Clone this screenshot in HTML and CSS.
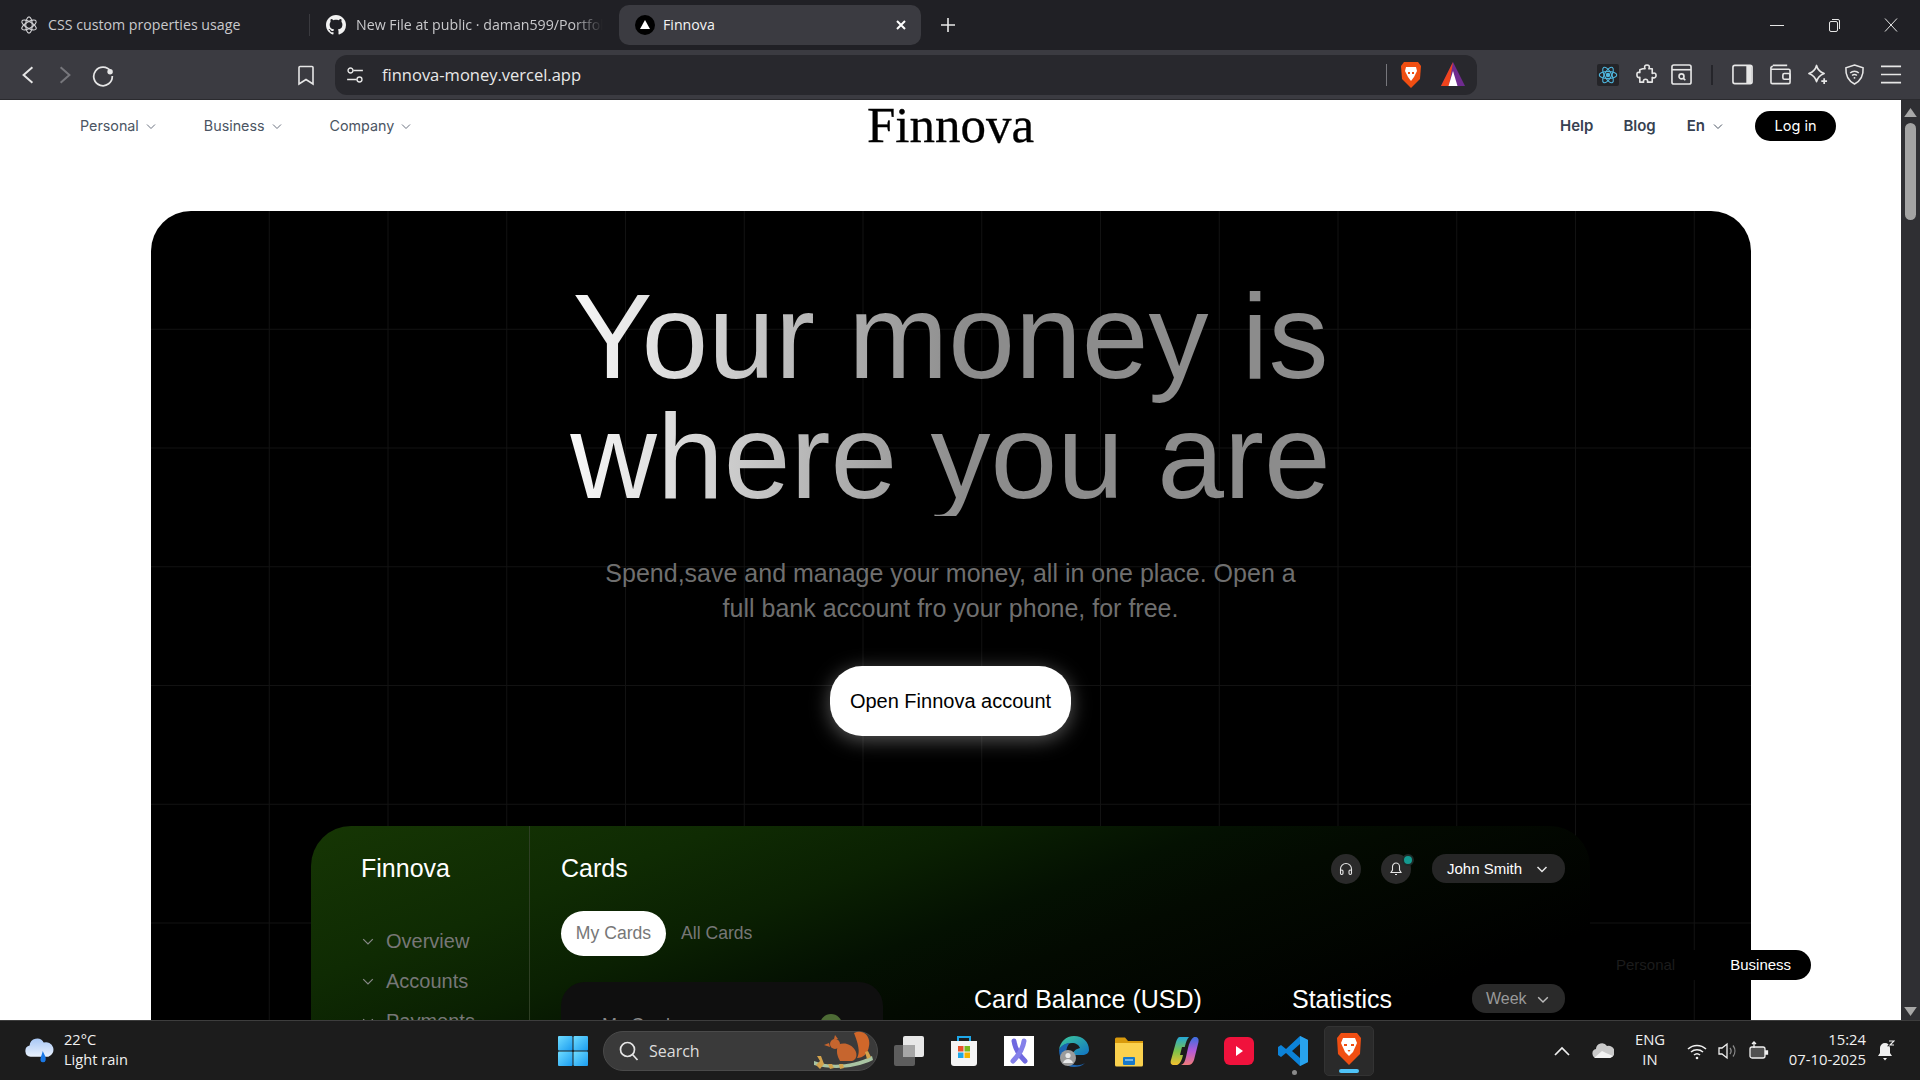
FILE: index.html
```html
<!DOCTYPE html>
<html lang="en">
<head>
<meta charset="utf-8">
<title>Finnova</title>
<link rel="stylesheet" href="styles.css">
</head>
<body>
<div class="screen">
  <header class="tabstrip">
    <div class="tab tab-one">
      <svg class="ico16" viewBox="0 0 20 20" fill="none" stroke="#d0d0d3" stroke-width="1.2"><ellipse cx="10" cy="10" rx="3.600" ry="9"/><ellipse cx="10" cy="10" rx="3.600" ry="9" transform="rotate(60 10 10)"/><ellipse cx="10" cy="10" rx="3.600" ry="9" transform="rotate(120 10 10)"/></svg>
      <span>CSS custom properties usage</span>
    </div>
    <div class="tab tab-two">
      <svg class="ico20" viewBox="0 0 16 16" fill="#f2f2f2"><path d="M8 0C3.58 0 0 3.58 0 8c0 3.54 2.29 6.53 5.47 7.59.4.07.55-.17.55-.38 0-.19-.01-.82-.01-1.49-2.01.37-2.53-.49-2.69-.94-.09-.23-.48-.94-.82-1.13-.28-.15-.68-.52-.01-.53.63-.01 1.08.58 1.23.82.72 1.21 1.87.87 2.33.66.07-.52.28-.87.51-1.07-1.78-.2-3.64-.89-3.64-3.95 0-.87.31-1.59.82-2.15-.08-.2-.36-1.02.08-2.12 0 0 .67-.21 2.2.82.64-.18 1.32-.27 2-.27.68 0 1.36.09 2 .27 1.53-1.04 2.2-.82 2.2-.82.44 1.1.16 1.92.08 2.12.51.56.82 1.27.82 2.15 0 3.07-1.87 3.75-3.65 3.95.29.25.54.73.54 1.48 0 1.07-.01 1.93-.01 2.2 0 .21.15.46.55.38A8.013 8.013 0 0016 8c0-4.42-3.58-8-8-8z"/></svg>
      <span class="fade">New File at public · daman599/Portfolio</span>
    </div>
    <div class="tab tab-active">
      <svg class="ico20" viewBox="0 0 20 20"><circle cx="10" cy="10" r="10" fill="#000"/><path d="M10 5l5 9H5z" fill="#fff"/></svg>
      <span class="tab-title">Finnova</span>
      <svg class="ico12" viewBox="0 0 12 12" stroke="#fff" stroke-width="2"><path d="M2 2l8 8M10 2l-8 8"/></svg>
    </div>
    <svg class="newtab ico14" viewBox="0 0 14 14" stroke="#e8e8e8" stroke-width="1.6"><path d="M7 0v14M0 7h14"/></svg>
    <div class="winctl">
      <svg class="ico14" viewBox="0 0 14 14" stroke="#e6e6e6"><path d="M0 7.5h14"/></svg>
      <svg class="ico14" viewBox="0 0 14 14" fill="none" stroke="#e6e6e6"><rect x="2.5" y="3.5" width="8" height="10" rx="1.5"/><path d="M5 1.5h6a1.5 1.5 0 011.5 1.5v8"/></svg>
      <svg class="ico14" viewBox="0 0 14 14" stroke="#e6e6e6"><path d="M1 0.5l12 13M13 0.5l-12 13"/></svg>
    </div>
  </header>

  <div class="toolbar">
    <svg class="tool tool-back" viewBox="0 0 20 20" fill="none" stroke="#e6e6e6" stroke-width="1.8"><path d="M14 3L6 10l8 7"/></svg>
    <svg class="tool tool-forward" viewBox="0 0 20 20" fill="none" stroke="#77777c" stroke-width="1.8"><path d="M6 3l8 7-8 7"/></svg>
    <svg class="tool tool-reload" viewBox="0 0 22 22" fill="none" stroke="#e6e6e6" stroke-width="1.6"><path d="M18 7.500A8.500 8.500 0 1 0 19.500 12"/><circle cx="17.500" cy="8" r="2.500" fill="#e6e6e6" stroke="none"/></svg>
    <svg class="tool tool-mark" viewBox="0 0 20 22" fill="none" stroke="#e6e6e6" stroke-width="1.6"><path d="M4 2.5h12a1 1 0 011 1V20l-7-4.5L3 20V3.500a1 1 0 011-1z"/></svg>
    <div class="address">
      <svg class="ico16" viewBox="0 0 16 16" fill="none" stroke="#e6e6e6" stroke-width="1.2"><circle cx="4" cy="4" r="2.2"/><path d="M6.500 4H15M1 12h8.500"/><circle cx="12" cy="12" r="2.200"/></svg>
      <span class="url">finnova-money.vercel.app</span>
      <span class="addr-div"></span>
      <svg class="ico24" viewBox="0 0 24 28"><path d="M5 1h14l3 4-1 13-9 9-9-9L2 5z" fill="#f04e12"/><path d="M7 6h10l1 4-3 6-3 4-3-4-3-6z" fill="#fff"/><path d="M9 11h2v2H9zM13 11h2v2h-2z" fill="#f04e12"/></svg>
      <svg class="ico24 tri" viewBox="0 0 24 26"><path d="M12 0l12 24H0z" fill="#6f2b8f"/><path d="M12 0L0 24h8z" fill="#f0441c"/><path d="M12 9l4.500 15h-9z" fill="#fff"/></svg>
    </div>
    <div class="tools-right">
      <span class="react-tile"><svg class="ico20" viewBox="0 0 24 24" fill="none" stroke="#4fb8e0" stroke-width="1.3"><ellipse cx="12" cy="12" rx="10.500" ry="4.200"/><ellipse cx="12" cy="12" rx="10.500" ry="4.200" transform="rotate(60 12 12)"/><ellipse cx="12" cy="12" rx="10.500" ry="4.200" transform="rotate(120 12 12)"/><circle cx="12" cy="12" r="2" fill="#4fb8e0"/></svg></span>
      <svg class="tool-r r-puzzle" viewBox="0 0 22 22" fill="none" stroke="#e6e6e6" stroke-width="1.7" stroke-linejoin="round"><path d="M7 5h2.500C8 2 10 1 11.500 1s3.500 1 2 4H17v5c3-1.500 4 .5 4 2s-1 3.500-4 2v5h-5c1-2.500-1-3-2-3s-3 .5-2 3H4v-5C1 15 1 12 1 11s0-3 3-2V6z"/></svg>
      <svg class="tool-r r-tab" viewBox="0 0 22 22" fill="none" stroke="#e6e6e6" stroke-width="1.7"><rect x="1" y="1" width="20" height="20" rx="2"/><path d="M1 6h20"/><circle cx="11" cy="13" r="2.600"/><path d="M13 15l2 2"/></svg>
      <span class="tool-div"></span>
      <svg class="tool-r r-side" viewBox="0 0 22 22" fill="none" stroke="#e6e6e6" stroke-width="1.7"><rect x="1" y="1.500" width="20" height="19" rx="2"/><path d="M15 2h5.500v18H15z" fill="#e6e6e6" stroke="none"/></svg>
      <svg class="tool-r r-wallet" viewBox="0 0 22 22" fill="none" stroke="#e6e6e6" stroke-width="1.7"><path d="M3 1.500h15M1 5a2 2 0 012-2.500M1 5v14a1.500 1.500 0 001.500 1.500h17A1.500 1.500 0 0021 19V7a1.500 1.500 0 00-1.500-1.500H1"/><rect x="13.500" y="10" width="7.500" height="6" rx="1.500"/></svg>
      <svg class="tool-r r-star" viewBox="0 0 22 22" fill="none" stroke="#e6e6e6" stroke-width="1.7" stroke-linejoin="round"><path d="M10 1.500c1 4 3 6.500 8 8.500-5 2-7 4.500-8 8.500C9 14.500 7 12 2 10c5-2 7-4.500 8-8.500z"/><path d="M18 15v6M15 18h6" stroke-width="1.800"/></svg>
      <svg class="tool-r r-vpn" viewBox="0 0 22 22" fill="none" stroke="#e6e6e6" stroke-width="1.600"><path d="M11 1l9 3c.5 8-2 13.500-9 17C4 17.500 1.500 12 2 4z"/><path d="M6.500 9.500a6.500 6.500 0 019 0M8.500 12a3.500 3.500 0 015 0"/><circle cx="11" cy="14.500" r="1" fill="#e6e6e6" stroke="none"/></svg>
      <svg class="tool-r r-menu" viewBox="0 0 22 22" stroke="#e6e6e6" stroke-width="1.800"><path d="M0 2.500h21M0 11h21M0 19.500h21"/></svg>
    </div>
  </div>

  <div class="viewport">
    <main class="page">
      <nav class="sitenav">
        <div class="nav-left">
          <a class="nav-link">Personal<svg class="chev" viewBox="0 0 10 10" fill="none" stroke="#6b7280"><path d="M1 3.500l4 4 4-4"/></svg></a>
          <a class="nav-link">Business<svg class="chev" viewBox="0 0 10 10" fill="none" stroke="#6b7280"><path d="M1 3.500l4 4 4-4"/></svg></a>
          <a class="nav-link">Company<svg class="chev" viewBox="0 0 10 10" fill="none" stroke="#6b7280"><path d="M1 3.500l4 4 4-4"/></svg></a>
        </div>
        <div class="brand">Finnova</div>
        <div class="nav-right">
          <a class="nav-strong">Help</a>
          <a class="nav-strong">Blog</a>
          <a class="nav-strong nav-lang">En<svg class="chev" viewBox="0 0 10 10" fill="none" stroke="#4b5563"><path d="M1 3.500l4 4 4-4"/></svg></a>
          <a class="login">Log in</a>
        </div>
      </nav>

      <section class="hero">
        <h1 class="headline">Your money is<br>where you are</h1>
        <p class="lede">Spend,save and manage your money, all in one place. Open a<br>full bank account fro your phone, for free.</p>
        <a class="cta">Open Finnova account</a>

        <div class="dash">
          <aside class="dash-side">
            <div class="dash-logo">Finnova</div>
            <ul class="dash-menu">
              <li><svg class="chev-s" viewBox="0 0 10 10" fill="none" stroke="#888"><path d="M1 3.500l4 4 4-4"/></svg>Overview</li>
              <li><svg class="chev-s" viewBox="0 0 10 10" fill="none" stroke="#888"><path d="M1 3.500l4 4 4-4"/></svg>Accounts</li>
              <li><svg class="chev-s" viewBox="0 0 10 10" fill="none" stroke="#888"><path d="M1 3.500l4 4 4-4"/></svg>Payments</li>
            </ul>
          </aside>
          <div class="dash-main">
            <div class="dash-head">
              <h2 class="dash-title">Cards</h2>
              <div class="dash-actions">
                <span class="round"><svg class="ico14" viewBox="0 0 14 14" fill="none" stroke="#e6e6e6" stroke-width="1.100"><path d="M1.500 9V7a5.500 5.500 0 0111 0v2"/><rect x="1.500" y="8" width="2.500" height="4.500" rx="1.200"/><rect x="10" y="8" width="2.500" height="4.500" rx="1.200"/></svg></span>
                <span class="round round-bell"><svg class="ico14" viewBox="0 0 14 14" fill="none" stroke="#e6e6e6" stroke-width="1.100"><path d="M7 1a3.500 3.500 0 00-3.500 3.500V8L2 10.500h10L10.500 8V4.500A3.500 3.500 0 007 1zM6 12.500h2"/></svg><i class="bell-dot"></i></span>
                <span class="user">John Smith<svg class="chev-u" viewBox="0 0 12 12" fill="none" stroke="#e6e6e6" stroke-width="1.500"><path d="M1.500 4l4.500 4.500L10.500 4"/></svg></span>
              </div>
            </div>
            <div class="dash-tabs">
              <span class="pill-on">My Cards</span>
              <span class="pill-off">All Cards</span>
            </div>
            <div class="dash-row">
              <div class="mycard">
                <span>My Cards</span>
                <i class="mycard-dot"></i>
              </div>
              <h3 class="balance">Card Balance (USD)</h3>
              <div class="stats">
                <h3 class="stats-title">Statistics</h3>
                <span class="week">Week<svg class="chev-s" viewBox="0 0 10 10" fill="none" stroke="#bbb" stroke-width="1.200"><path d="M1 3.500l4 4 4-4"/></svg></span>
              </div>
            </div>
          </div>
        </div>
      </section>

      <div class="switcher">
        <span class="switch-off">Personal</span>
        <span class="switch-on">Business</span>
      </div>
    </main>
    <div class="scrollbar">
      <svg class="sb-arrow" viewBox="0 0 14 10" fill="#a8a8a8"><path d="M7 0l7 10H0z"/></svg>
      <span class="sb-thumb"></span>
      <svg class="sb-arrow sb-down" viewBox="0 0 14 10" fill="#a8a8a8"><path d="M7 10L0 0h14z"/></svg>
    </div>
  </div>

  <footer class="taskbar">
    <div class="weather">
      <svg class="weather-ico" viewBox="0 0 32 32"><defs><linearGradient id="wc" x1="0" y1="0" x2="0" y2="1"><stop offset="0" stop-color="#a9c8f5"/><stop offset="1" stop-color="#e8f0fc"/></linearGradient></defs><path d="M7 22a6 6 0 01-1-11.800A8 8 0 0121 7a6.500 6.500 0 015 15z" fill="url(#wc)"/><path d="M20 16c1.500 4 4 6 3 10a2.800 2.800 0 01-5.500-.500c0-3 1.500-5 2.500-9.500z" fill="#1a78e6"/></svg>
      <div class="weather-txt"><span>22°C</span><span>Light rain</span></div>
    </div>
    <div class="slot">
      <svg class="ico30" viewBox="0 0 30 30"><defs><linearGradient id="wn" x1="0" y1="0" x2="1" y2="1"><stop offset="0" stop-color="#6fdcff"/><stop offset="1" stop-color="#1a9cf0"/></linearGradient></defs><rect width="14.500" height="14.500" rx="1" fill="url(#wn)"/><rect x="15.500" width="14.500" height="14.500" rx="1" fill="url(#wn)"/><rect y="15.500" width="14.500" height="14.500" rx="1" fill="url(#wn)"/><rect x="15.500" y="15.500" width="14.500" height="14.500" rx="1" fill="url(#wn)"/></svg>
    </div>
    <div class="search">
      <svg class="ico20" viewBox="0 0 20 20" fill="none" stroke="#e6e6e6" stroke-width="1.700"><circle cx="8.500" cy="8.500" r="7"/><path d="M13.500 13.500l5 5.500"/></svg>
      <span class="search-txt">Search</span>
      <svg class="squirrel" viewBox="0 0 62 40"><path d="M2 30c14 6 40 5 58-5l1 4c-18 9-42 10-59 5z" fill="#a9c4a2"/><path d="M42 2c9-4 17 3 15 13-1 8-6 12-12 12 3-6 2-12-3-25z" fill="#d0672a"/><path d="M26 14c6-3 13-1 17 5 3 5 1 10-3 11H28c-3-5-4-10-2-16z" fill="#c6652e"/><circle cx="23" cy="13" r="5" fill="#c6652e"/><path d="M17 12l-5 2 6 2zM22 8l1-4 3 4z" fill="#c6652e"/><path d="M5 25l3 5-4 4 4 4 4-5-3-8zM53 21l2 7 4-2-3-6z" fill="#d2a24c"/><path d="M16 33l2 5 4-1-2-4zM27 33l1 5 4-1-1-4z" fill="#d2a24c"/></svg>
    </div>
    <div class="slot">
      <svg class="ico32" viewBox="0 0 32 32"><rect x="1" y="10" width="21" height="21" rx="2" fill="#5d5d5d"/><rect x="10" y="1" width="21" height="21" rx="2" fill="#e8e8e8"/><rect x="10" y="10" width="12" height="12" fill="#a6a6a6"/></svg>
    </div>
    <div class="slot">
      <svg class="ico32" viewBox="0 0 32 32"><path d="M10 6V2h12v4" fill="none" stroke="#1ea7e8" stroke-width="2"/><path d="M3 6h26v22a3 3 0 01-3 3H6a3 3 0 01-3-3z" fill="#f4f4f4"/><rect x="10" y="11" width="5.500" height="5.500" fill="#e8502a"/><rect x="16.500" y="11" width="5.500" height="5.500" fill="#7ab81d"/><rect x="10" y="17.500" width="5.500" height="5.500" fill="#1ea7e8"/><rect x="16.500" y="17.500" width="5.500" height="5.500" fill="#f4b400"/></svg>
    </div>
    <div class="slot">
      <svg class="ico30" viewBox="0 0 30 30"><rect width="30" height="30" fill="#fff"/><path d="M10 5c1 7 5 14 11 20" fill="none" stroke="#6f68e0" stroke-width="5" stroke-linecap="round"/><path d="M20 5c-1 7-5 14-11 20" fill="none" stroke="#8480ea" stroke-width="5" stroke-linecap="round"/></svg>
    </div>
    <div class="slot">
      <svg class="ico32" viewBox="0 0 32 32"><defs><linearGradient id="ed" x1="0" y1="0" x2="1" y2="1"><stop offset="0" stop-color="#3ecb9a"/><stop offset="1" stop-color="#1072c4"/></linearGradient></defs><path d="M16 1c9 0 15 6 15 14 0 3-3 5-7 5h-9c0-4 3-6 7-7-1-3-4-5-8-5C8 8 3 11 1 15 2 7 8 1 16 1z" fill="url(#ed)"/><path d="M1 15c2-4 6-7 11-7-5 4-5 14 0 20 4 3 10 3 15 0-3 3-7 4-11 4C7 32 1 24 1 15z" fill="#1a63b0"/><circle cx="10" cy="23" r="8" fill="#9b9b9b"/><circle cx="10" cy="20.500" r="2.600" fill="#e8e8e8"/><path d="M5 28c1-3 3-4 5-4s4 1 5 4z" fill="#e8e8e8"/></svg>
    </div>
    <div class="slot">
      <svg class="ico32" viewBox="0 0 32 32"><path d="M2 4a1.500 1.500 0 011.500-1.500H12L15 6h15v6H2z" fill="#d99a0c"/><path d="M2 8h28v22a1.500 1.500 0 01-1.500 1.500h-25A1.500 1.500 0 012 30z" fill="#fad14e"/><rect x="10" y="22" width="12" height="8" rx="1" fill="#1678c9"/><path d="M12 25h8" stroke="#9fd3f5" stroke-width="1.400"/></svg>
    </div>
    <div class="slot">
      <svg class="ico32" viewBox="0 0 32 32"><defs><linearGradient id="co" x1="0" y1="0" x2="0" y2="1"><stop offset="0" stop-color="#25a9d6"/><stop offset=".5" stop-color="#7cc24a"/><stop offset="1" stop-color="#f4c02e"/></linearGradient><linearGradient id="co2" x1="0" y1="0" x2="0" y2="1"><stop offset="0" stop-color="#3a6fe0"/><stop offset=".5" stop-color="#b45ad8"/><stop offset="1" stop-color="#f07a7a"/></linearGradient></defs><path d="M12 2h9c-2 2-3 5-4 9l-2 9c-1 5-3 9-6 10H6c-3 0-4-2-3-5l5-18c1-3 2-5 4-5z" fill="url(#co)"/><path d="M20 30h-7c3-1 4-4 5-8l2-9c1-5 3-9 6-11h1c3 0 4 2 3.500 5L26 25c-1 3-3 5-6 5z" fill="url(#co2)"/><path d="M14 12h4l-2 8h-4z" fill="#1c1c1c"/></svg>
    </div>
    <div class="slot">
      <svg class="ico30" viewBox="0 0 30 30"><rect y="1" width="30" height="28" rx="6" fill="#f0123c"/><path d="M12 10l7 5-7 5z" fill="#fff"/></svg>
    </div>
    <div class="slot slot-dot">
      <svg class="ico32" viewBox="0 0 32 32"><path d="M22 1l8 4v22l-8 4L8 18l-5 4-3-2v-8l3-2 5 4zM22 9l-8 7 8 7z" fill="#0c82d8"/><path d="M22 1l8 4v22l-8 4z" fill="#28a3ee"/></svg>
      <i class="run-dot"></i>
    </div>
    <div class="slot slot-active">
      <svg class="ico32 lion" viewBox="0 0 28 34"><path d="M6 1h16l4 5-1 16-11 11L3 22 2 6z" fill="#f04e12"/><path d="M8 6h12l2 5-4 9-4 4-4-4-4-9z" fill="#fff"/><path d="M9 12h3v2H9zM16 12h3v2h-3zM12.500 18h3l-1.500 2z" fill="#f04e12"/></svg>
      <i class="run-bar"></i>
    </div>
    <div class="tray">
      <svg class="tray-up" viewBox="0 0 16 10" fill="none" stroke="#f0f0f0" stroke-width="1.700"><path d="M1 9l7-7 7 7"/></svg>
      <svg class="tray-cloud" viewBox="0 0 22 18"><path d="M5 16a4.500 4.500 0 01-1-8.900A6 6 0 0115 4a5 5 0 013 12z" fill="#c9c9c9"/><path d="M2 16l8-7 4 2 7 3-3 2z" fill="#f2f2f2"/></svg>
      <div class="tray-lang"><span>ENG</span><span>IN</span></div>
      <svg class="tray-wifi" viewBox="0 0 20 20" fill="none" stroke="#f0f0f0" stroke-width="1.500"><path d="M1 8a13 13 0 0118 0M4 11a9 9 0 0112 0M7 14a4.500 4.500 0 016 0"/><circle cx="10" cy="17" r="1.300" fill="#f0f0f0" stroke="none"/></svg>
      <svg class="tray-vol" viewBox="0 0 20 20" fill="none" stroke="#f0f0f0" stroke-width="1.300"><path d="M1 7h3l5-4v14l-5-4H1z"/><path d="M12 7a5 5 0 010 6M15 4.500a9 9 0 010 11" stroke="#8a8a8a"/></svg>
      <svg class="tray-bat" viewBox="0 0 20 20" fill="none" stroke="#f0f0f0" stroke-width="1.300"><rect x="1" y="6" width="15" height="11" rx="2" fill="#f0f0f0" fill-opacity=".25"/><path d="M16.500 10v3h2v-3z" fill="#f0f0f0"/><path d="M5 1v6M3 3l2-2 2 2"/></svg>
      <div class="tray-clock"><span>15:24</span><span>07-10-2025</span></div>
      <svg class="tray-bell" viewBox="0 0 18 22" fill="#f0f0f0"><path d="M8 3a5 5 0 00-5 5v5l-2 3h14l-2-3V8a5 5 0 00-5-5zM6 18h4l-2 2.500z"/><path d="M12 1h5l-4 4h4" fill="none" stroke="#1c1c1c" stroke-width="2.500"/><path d="M12 1h5l-4 4h4" fill="none" stroke="#f0f0f0" stroke-width="1.100"/></svg>
    </div>
  </footer>
</div>
</body>
</html>
```
FILE: styles.css
```css
* { box-sizing: border-box; }
html, body { margin: 0; height: 100%; overflow: hidden; }
body { font-family: "Liberation Sans", Arial, sans-serif; background: #fff; }
ul { list-style: none; margin: 0; padding: 0; }
h1, h2, h3, p { margin: 0; font-weight: 400; }
i { display: block; }
svg { display: block; flex: none; }

.ico12 { width: 12px; height: 12px; }
.ico14 { width: 14px; height: 14px; }
.ico16 { width: 18px; height: 18px; }
.ico20 { width: 20px; height: 20px; }
.ico24 { width: 24px; height: 28px; }
.ico30 { width: 30px; height: 30px; }
.ico32 { width: 32px; height: 32px; }

.screen { display: flex; flex-direction: column; width: 1920px; height: 1080px; }

/* tab strip */
.tabstrip { height: 50px; flex: none; display: flex; align-items: center; background: #202025; color: #c9c9cc; font: 14.2px/18px "Open Sans", sans-serif; }
.tab { display: flex; align-items: center; height: 40px; }
.tab span { padding-bottom: 1px; }
.tab-one { width: 309px; padding-left: 20px; gap: 10px; }
.tab-two { width: 310px; padding-left: 16px; gap: 10px; border-left: 1px solid #3a3a3f; height: 22px; }
.fade { width: 247px; white-space: nowrap; overflow: hidden; -webkit-mask-image: linear-gradient(90deg, #000 88%, transparent); mask-image: linear-gradient(90deg, #000 88%, transparent); }
.tab-active { width: 302px; padding: 0 14px 0 16px; gap: 8px; background: #3b3b41; border-radius: 10px; color: #f4f4f4; }
.tab-title { flex: 1; }
.newtab { margin-left: 20px; }
.winctl { margin-left: auto; display: flex; gap: 43px; padding-right: 22px; }

/* toolbar */
.toolbar { height: 50px; flex: none; display: flex; align-items: center; background: #3b3b41; border-bottom: 1px solid #2a2a2e; }
.tool { width: 20px; height: 20px; }
.tool-back { margin-left: 17px; width: 22px; height: 24px; }
.tool-forward { margin-left: 15px; width: 22px; height: 24px; }
.tool-reload { margin-left: 15px; width: 24px; height: 24px; }
.tool-mark { margin-left: 181px; width: 20px; height: 22px; }
.address { display: flex; align-items: center; width: 1142px; height: 40px; margin-left: 19px; padding-left: 11px; background: #28282d; border-radius: 12px; color: #e8e8e8; }
.url { margin-left: 18px; font: 16.5px "Open Sans", sans-serif; }
.addr-div { width: 1px; height: 22px; margin-left: auto; background: #77777c; }
.address .ico24 { margin-left: 12px; }
.address .tri { margin-left: 18px; margin-right: 12px; }
.tools-right { display: flex; align-items: center; margin-left: 120px; }
.react-tile { display: flex; align-items: center; justify-content: center; width: 22px; height: 22px; background: #242428; border-radius: 2px; }
.tool-r { width: 21px; height: 21px; }
.r-puzzle { margin-left: 17px; }
.r-tab { margin-left: 14px; }
.tool-div { width: 2px; height: 20px; margin-left: 19px; background: #25252a; }
.r-side { margin-left: 19px; }
.r-wallet { margin-left: 17px; }
.r-star { margin-left: 16px; }
.r-vpn { margin-left: 16px; }
.r-menu { margin-left: 16px; }

/* viewport */
.viewport { flex: 1; display: flex; min-height: 0; }
.page { position: relative; flex: 1; min-width: 0; overflow: hidden; background: #fff; }
.scrollbar { width: 19px; flex: none; display: flex; flex-direction: column; align-items: center; background: #2f2f33; padding-top: 8px; }
.sb-arrow { width: 13px; height: 9px; }
.sb-thumb { width: 11px; height: 97px; margin-top: 6px; background: #a3a3a3; border-radius: 6px; }
.sb-down { margin-top: auto; margin-bottom: 4px; }

/* site nav */
.sitenav { position: relative; display: flex; align-items: center; justify-content: space-between; height: 51px; padding: 0 65px 0 80px; font-family: Inter, sans-serif; font-size: 14.3px; }
.nav-left { display: flex; gap: 48px; color: #4b5563; }
.nav-link { display: flex; align-items: center; gap: 7px; }
.chev { width: 10px; height: 10px; }
.brand { position: absolute; left: 0; right: 0; top: 0; text-align: center; font: 51px/50px "Liberation Serif", serif; color: #000; -webkit-text-stroke: .3px #000; }
.nav-right { position: relative; display: flex; align-items: center; color: #374151; font-weight: 600; font-size: 15px; }
.nav-strong { margin-right: 31px; }
.nav-strong:first-child { margin-right: 30px; }
.nav-lang { display: flex; align-items: center; gap: 8px; margin-right: 32px; }
.login { width: 81px; height: 30px; line-height: 30px; text-align: center; background: #000; color: #fff; border-radius: 15px; font-weight: 400; font-size: 14.5px; }

/* hero */
.hero { display: flex; flex-direction: column; align-items: center; width: 1600px; height: 1100px; margin: 60px 0 0 151px; padding: 65px 1px 0 0; border-radius: 40px; background-color: #000; background-image: linear-gradient(90deg, transparent 117.75px, #121212 117.75px), linear-gradient(180deg, transparent 117.75px, #121212 117.75px); background-size: 118.75px 118.75px; }
.headline { font-size: 120px; line-height: 120px; text-align: center; background: linear-gradient(90deg, #f8f8f8 0%, #8c8c8c 52%, #8c8c8c 100%); -webkit-background-clip: text; background-clip: text; color: transparent; }
.lede { margin-top: 40px; font-size: 25px; line-height: 35px; text-align: center; color: #6f6f6f; }
.cta { margin-top: 40px; width: 241px; height: 70px; line-height: 70px; text-align: center; font-size: 20px; color: #000; background: #fff; border-radius: 32px; box-shadow: 0 4px 20px rgba(255,255,255,.35); }

/* dashboard */
.dash { display: flex; width: 1279px; height: 700px; margin-top: 90px; border-radius: 40px; background: linear-gradient(160deg, #163604 0%, #0f2b03 16%, #0a2002 26%, #041102 35%, #030a01 42%, #000 60%); color: #fff; }
.dash-side { width: 219px; flex: none; padding: 28px 0 0 51px; border-right: 1px solid #2e3f24; }
.dash-logo { margin-left: -1px; font-size: 25px; line-height: 28px; }
.dash-menu { margin-top: 39px; color: #777; font-size: 20px; }
.dash-menu li { display: flex; align-items: center; height: 40px; gap: 12px; }
.chev-s { width: 12px; height: 12px; }
.dash-main { flex: 1; min-width: 0; padding: 28px 25px 0 31px; }
.dash-head { display: flex; align-items: flex-start; justify-content: space-between; height: 30px; }
.dash-title { font-size: 25px; line-height: 28px; }
.dash-actions { display: flex; align-items: flex-start; }
.round { position: relative; display: flex; align-items: center; justify-content: center; width: 30px; height: 30px; background: #2a2a2a; border-radius: 50%; margin-right: 20px; }
.round-bell { margin-right: 21px; }
.bell-dot { position: absolute; top: 0; right: -3px; width: 12px; height: 12px; background: #149a90; border: 2px solid #1e2a28; border-radius: 50%; }
.user { display: flex; align-items: center; justify-content: space-between; width: 133px; height: 29px; padding: 0 17px 0 15px; background: #262626; border-radius: 14px; font-size: 15px; }
.chev-u { width: 12px; height: 12px; }
.dash-tabs { display: flex; align-items: center; gap: 15px; margin-top: 27px; font-size: 17.6px; }
.pill-on { width: 105px; height: 45px; line-height: 45px; text-align: center; background: #fff; color: #777; border-radius: 23px; }
.pill-off { color: #777; }
.dash-row { display: flex; align-items: flex-start; margin-top: 26px; }
.mycard { display: flex; justify-content: space-between; width: 322px; height: 300px; padding: 32px 41px; background: #0f0f0f; border-radius: 24px; color: #888; font-size: 18px; line-height: 22px; }
.mycard-dot { width: 22px; height: 22px; border-radius: 50%; background: #4d6b35; }
.balance { margin: 3px 0 0 91px; width: 318px; font-size: 25px; line-height: 28px; }
.stats { display: flex; justify-content: space-between; flex: 1; }
.stats-title { margin-top: 3px; font-size: 25px; line-height: 28px; }
.week { display: flex; align-items: center; justify-content: space-between; width: 93px; height: 29px; margin-top: 2px; padding: 0 16px 0 14px; background: #2a2a2a; border-radius: 14px; color: #999; font-size: 16px; }

/* floating switch */
.switcher { position: absolute; top: 850px; left: 1600px; display: flex; align-items: center; height: 30px; width: 211px; padding-bottom: 2px; border-radius: 15px; background: #000; font-size: 15px; }
.switch-off { margin-left: 16px; color: #1c1c1c; }
.switch-on { margin-left: 55px; color: #fff; }

/* taskbar */
.taskbar { height: 60px; flex: none; display: flex; align-items: center; background: #1c1c1c; border-top: 1px solid #3d3d3d; color: #f0f0f0; font: 14.6px "Open Sans", sans-serif; }
.weather { display: flex; align-items: center; width: 545px; padding-left: 24px; }
.weather-ico { width: 30px; height: 30px; }
.weather-txt { display: flex; flex-direction: column; margin: -4px 0 0 10px; line-height: 20px; }
.slot { position: relative; display: flex; align-items: center; justify-content: center; width: 55px; height: 58px; }
.search { display: flex; align-items: center; width: 275px; height: 40px; margin: 0 3px 0 3px; padding: 0 3px 0 15px; background: #3a3a3a; border: 1px solid #4a4a4a; border-radius: 20px; }
.search-txt { margin-left: 10px; font-size: 16px; flex: 1; color: #ddd; }
.squirrel { width: 62px; height: 40px; }
.run-dot { position: absolute; bottom: 5px; left: 26px; width: 5px; height: 5px; border-radius: 50%; background: #8a8a8a; }
.slot-active { width: 50px; height: 50px; margin-left: 3px; background: #2a2a2a; border: 1px solid #333; border-radius: 5px; }
.lion { width: 30px; height: 34px; margin-top: -4px; }
.run-bar { position: absolute; bottom: 2px; left: 14px; width: 20px; height: 4px; border-radius: 2px; background: #4fc3f7; }
.tray { display: flex; align-items: center; margin-left: auto; padding-right: 25px; }
.tray-up { width: 16px; height: 10px; }
.tray-cloud { width: 22px; height: 18px; margin-left: 22px; }
.tray-lang { display: flex; flex-direction: column; align-items: center; width: 46px; margin: -3px 0 0 13px; line-height: 20px; font-size: 14.8px; }
.tray-wifi { width: 20px; height: 20px; margin-left: 14px; }
.tray-vol { width: 20px; height: 20px; margin-left: 11px; }
.tray-bat { width: 20px; height: 20px; margin-left: 11px; }
.tray-clock { display: flex; flex-direction: column; align-items: flex-end; width: 97px; margin-top: -3px; line-height: 20px; font-size: 14.8px; }
.tray-bell { width: 18px; height: 22px; margin-left: 11px; }
```
